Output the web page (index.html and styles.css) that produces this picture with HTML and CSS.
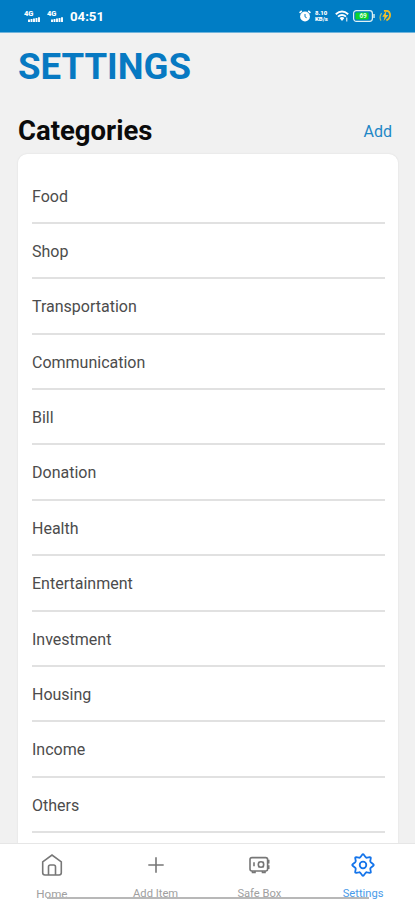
FILE: index.html
```html
<!DOCTYPE html>
<html lang="en">
<head>
<meta charset="utf-8">
<title>Settings</title>
<link rel="stylesheet" href="styles.css">
</head>
<body>
<div class="app">
  <header class="status">
    <div class="status-left">
      <svg class="signal" width="16" height="14" viewBox="0 0 16 14"><text x="0" y="6.4" class="net">4G</text><path d="M5 12V9.500M7.500 12V9M10 12V8.500M12.500 12V8M15 12V7.200"/></svg>
      <svg class="signal" width="16" height="14" viewBox="0 0 16 14"><text x="0" y="6.4" class="net">4G</text><path d="M5 12V9.500M7.500 12V9M10 12V8.500M12.500 12V8M15 12V7.200"/></svg>
      <span class="clock">04:51</span>
    </div>
    <div class="status-right">
      <svg width="12" height="12" viewBox="0 0 12 12"><circle cx="6" cy="6.5" r="4.9" fill="#fff"/><path d="M.6 2.8 2.8.9M9.2.9l2.2 1.900" stroke="#fff" stroke-width="1.7"/><path d="M6 4v2.800l1.700 1" fill="none" stroke="#007dc5" stroke-width="1"/></svg>
      <span class="speed"><span>8.10</span><span>KB/s</span></span>
      <svg class="wifi" width="14" height="12" viewBox="0 0 14 12"><path d="M.8 4.200Q7-1.200 13.200 4.200M3 6.600Q7 3.200 11 6.600" fill="none" stroke="#fff" stroke-width="1.900"/><path d="M4.600 8Q7 6.200 9.400 8L7 11Z" fill="#fff"/><path d="M11.800 7.500v4" stroke="#fff" stroke-width="1"/></svg>
      <svg class="battery" width="22" height="12" viewBox="0 0 22 12"><rect x=".6" y=".6" width="18.800" height="10.800" rx="2.800" fill="#007dc5" stroke="#dff2f4" stroke-width="1.200"/><rect x="2.400" y="2.400" width="13.200" height="7.200" rx="1" fill="#0bd52b"/><path d="M21 4v4" stroke="#dff2f4" stroke-width="1.400"/><text x="6.400" y="8.400" class="level">69</text></svg>
      <svg class="power" width="12" height="12" viewBox="0 0 12 12"><path d="M5 1Q10-.2 11 4Q11.600 8.400 7.400 10.400" fill="none" stroke="#f1bc24" stroke-width="1.800"/><path d="M7.400.8 3.300 6.700h2.300L4.600 11l4.800-6H6.700Z" fill="#f6c22b"/><path d="M2.600 3.200Q-.2 7 2 10.600" fill="none" stroke="#a9bd6d" stroke-width="1.200"/></svg>
    </div>
  </header>
  <main class="content">
    <h1>SETTINGS</h1>
    <div class="section-head"><h2>Categories</h2><a class="add">Add</a></div>
    <ul class="card">
      <li>Food</li><li>Shop</li><li>Transportation</li><li>Communication</li><li>Bill</li><li>Donation</li><li>Health</li><li>Entertainment</li><li>Investment</li><li>Housing</li><li>Income</li><li>Others</li>
    </ul>
  </main>
  <nav class="tabs">
    <a class="tab"><svg width="24" height="24" viewBox="0 0 24 24"><path d="M2.700 8.800 12 2l9.300 6.800V19.800q0 2.200-2.200 2.200H4.900Q2.700 22 2.700 19.800Z"/><path d="M8.500 22V13.800q0-1.800 1.800-1.800h3.400q1.800 0 1.800 1.800V22"/></svg><span class="home-label">Home</span></a>
    <a class="tab"><svg width="24" height="24" viewBox="0 0 24 24"><path d="M12 4.300v15.400M4.300 12h15.400"/></svg><span>Add Item</span></a>
    <a class="tab"><svg width="24" height="24" viewBox="0 0 24 24"><rect x="3" y="4.600" width="17.600" height="13.400" rx="2"/><path d="M5.500 18v1.500h2.500V18M15.500 18v1.500H18V18M20.600 7.500h1.100v2.300h-1.100M20.600 13h1.100v2.300h-1.100M7 9.300v4"/><circle cx="14" cy="11.500" r="2.700"/><path d="m11.400 8.900.8.800M15.900 13.400l.8.800M16.700 8.900l-.8.800M12.200 13.400l-.8.800"/></svg><span>Safe Box</span></a>
    <a class="tab active"><svg width="24" height="24" viewBox="0 0 24 24"><path d="M9.300 4.200L11.200 1.700Q12 .8 12.800 1.700L14.700 4.200Q15.300 4.900 16.200 4.700L18.800 4.200Q20 4.100 19.800 5.200L19.300 7.800Q19.100 8.700 19.800 9.300L22.300 11.200Q23.200 12 22.300 12.800L19.800 14.700Q19.100 15.300 19.300 16.200L19.800 18.800Q20 19.900 18.800 19.800L16.200 19.300Q15.300 19.100 14.700 19.800L12.800 22.300Q12 23.200 11.200 22.300L9.300 19.800Q8.700 19.100 7.800 19.300L5.200 19.800Q4 19.900 4.200 18.800L4.700 16.200Q4.900 15.300 4.200 14.700L1.700 12.800Q.8 12 1.700 11.200L4.200 9.300Q4.900 8.700 4.700 7.800L4.200 5.200Q4 4.100 5.200 4.200L7.800 4.700Q8.700 4.900 9.300 4.200Z"/><circle cx="12" cy="12" r="3.300"/></svg><span>Settings</span></a>
    <div class="home-bar"></div>
  </nav>
</div>
</body>
</html>
```
FILE: styles.css
```css
* { box-sizing: border-box; }
body { margin: 0; font-family: Roboto, "Liberation Sans", sans-serif; background: #f1f1f1; }
.app { height: 900px; display: flex; flex-direction: column; overflow: hidden; }
.status { flex: none; height: 33px; background: #007dc5; border-bottom: 1px solid #70b4dc; display: flex; justify-content: space-between; padding: 0 24px; color: #fff; }
.status-left, .status-right { display: flex; align-items: center; }
.signal { margin: 1px 7px 0 0; }
.signal path { stroke: #fff; stroke-width: 1.9; }
.net { font-size: 7.5px; font-weight: 900; fill: #fff; }
.clock { font-size: 13.2px; font-weight: 700; line-height: 33px; margin-top: 1px; }
.speed { display: flex; flex-direction: column; font-size: 6px; line-height: 6px; font-weight: 900; margin: 0 6px 0 4px; width: 14px; }
.battery { margin-left: 4px; }
.power { margin-left: 4px; }
.level { font-size: 6.5px; font-weight: 700; fill: #e4ffe8; }
.content { flex: 1; min-height: 0; overflow: hidden; padding: 0 17px 0 18px; }
h1 { margin: 13px 0 0; font-size: 36.6px; line-height: 42px; font-weight: 700; color: #0779c2; }
.section-head { display: flex; justify-content: space-between; height: 66px; padding: 26px 6px 0 0; }
h2 { margin: 0; font-size: 27.5px; line-height: 34px; font-weight: 700; color: #0b0b0b; }
.add { font-size: 16px; line-height: 36px; color: #1e87c6; }
.card { list-style: none; margin: 0; padding: 14.5px 13px 0 14px; height: 720px; background: #fff; border-radius: 9px; box-shadow: 0 0 2px rgba(0, 0, 0, .1); }
.card li { height: 55.4px; line-height: 55.4px; font-size: 16px; color: #4c4c4c; border-bottom: 2px solid #e1e1e1; }
.tabs { position: relative; flex: none; height: 57px; border-top: 1px solid #e6e6e6; background: #fff; display: flex; }
.tab { flex: 1; display: flex; flex-direction: column; align-items: center; padding-top: 9px; color: #777; font-size: 11.2px; line-height: 12px; }
.tab svg { fill: none; stroke: currentColor; stroke-width: 1.6; }
.tab span { margin-top: 11px; color: #a0a0a0; }
.tab .home-label { font-size: 11.6px; }
.tab.active { color: #1474ea; }
.tab.active svg { stroke-width: 1.8; }
.tab.active span { color: #4a9be9; }
.home-bar { position: absolute; left: 47px; width: 322px; bottom: 1px; height: 2px; background: #b8b8b8; }
```
